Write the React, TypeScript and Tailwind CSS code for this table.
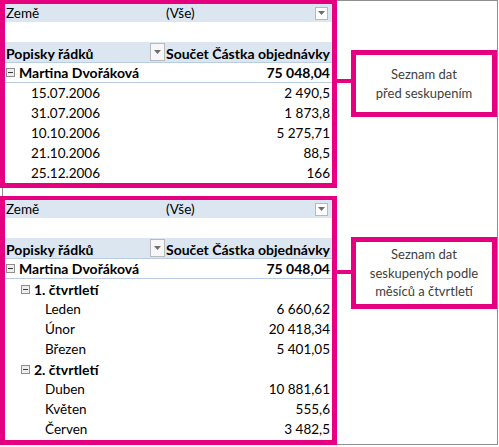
import React from "react";

function Caret({ tall = false }: { tall?: boolean }) {
  return (
    <div
      className={
        tall
          ? "w-[15px] h-[18px] border border-[#b9b9b9] bg-[#f7f7f7] flex items-center justify-center"
          : "w-[13px] h-[13px] border border-[#b9b9b9] bg-white flex items-center justify-center"
      }
    >
      <svg width="7" height="4" viewBox="0 0 7 4">
        <path d="M0 0h7L3.5 4z" fill="#6e6e6e" />
      </svg>
    </div>
  );
}

function Minus() {
  return (
    <svg width="9" height="9" viewBox="0 0 9 9" className="shrink-0">
      <rect x="0.5" y="0.5" width="8" height="8" fill="#eeeeee" stroke="#8e8e8e" />
      <path d="M2 4.5h5" stroke="#3a3a3a" strokeWidth="1" />
    </svg>
  );
}

type Row = { label: string; value?: string; level: number; group?: boolean };

function Pivot({ rows, h }: { rows: Row[]; h: string }) {
  return (
    <div
      className={`w-[337px] ${h} shrink-0 border-[#e4007f] border-x-[5px] border-t-[4px] border-b-[5px] bg-white flex flex-col text-[13.5px] text-black leading-[17px]`}
    >
      <div className="h-[18px] bg-[#dce6f1] flex items-center">
        <div className="w-[160px] pl-[1px]">Země</div>
        <div className="flex-1 flex items-center pl-[1px] pr-[4px]">
          <span>(Vše)</span>
          <div className="ml-auto">
            <Caret />
          </div>
        </div>
      </div>
      <div className="h-[20px]" />
      <div className="h-[21px] bg-[#dce6f1] flex items-center border-b border-[#b8cce4] font-bold text-[14px]">
        <div className="w-[160px] pl-[1px] flex items-center">
          <span className="pt-[2px]">Popisky řádků</span>
          <div className="ml-auto">
            <Caret tall />
          </div>
        </div>
        <div className="flex-1 pl-[1px] pt-[2px]">Součet Částka objednávky</div>
      </div>
      <div className="h-[20px] flex items-center border-b border-[#b8cce4] font-bold text-[14px]">
        <div className="flex items-center pl-[1px] gap-[4px]">
          <Minus />
          <span>Martina Dvořáková</span>
        </div>
        <div className="ml-auto pr-[2px]">75 048,04</div>
      </div>
      {rows.map((r, i) => (
        <div key={i} className="h-[20px] flex items-center">
          {r.group ? (
            <div className="flex items-center pl-[16px] gap-[4px] font-bold text-[14px]">
              <Minus />
              <span>{r.label}</span>
            </div>
          ) : (
            <div className={r.level === 2 ? "pl-[40px]" : "pl-[26px]"}>{r.label}</div>
          )}
          {r.value && <div className="ml-auto pr-[2px]">{r.value}</div>}
        </div>
      ))}
    </div>
  );
}

function Callout({ lines, h }: { lines: string[]; h: string }) {
  return (
    <div
      className={`w-[146px] ${h} border-[5px] border-[#e4007f] bg-white flex flex-col items-center justify-center text-[13px] leading-[18.5px] text-[#404040]`}
    >
      {lines.map((l, i) => (
        <div key={i}>{l}</div>
      ))}
    </div>
  );
}

export default function App() {
  const top: Row[] = [
    { label: "15.07.2006", value: "2 490,5", level: 1 },
    { label: "31.07.2006", value: "1 873,8", level: 1 },
    { label: "10.10.2006", value: "5 275,71", level: 1 },
    { label: "21.10.2006", value: "88,5", level: 1 },
    { label: "25.12.2006", value: "166", level: 1 },
  ];
  const bottom: Row[] = [
    { label: "1. čtvrtletí", level: 1, group: true },
    { label: "Leden", value: "6 660,62", level: 2 },
    { label: "Únor", value: "20 418,34", level: 2 },
    { label: "Březen", value: "5 401,05", level: 2 },
    { label: "2. čtvrtletí", level: 1, group: true },
    { label: "Duben", value: "10 881,61", level: 2 },
    { label: "Květen", value: "555,6", level: 2 },
    { label: "Červen", value: "3 482,5", level: 2 },
  ];
  return (
    <div className="w-[499px] h-[447px] bg-white font-[Lato,sans-serif] overflow-hidden">
      <div className="ml-[2px] w-[496px] h-[445px] border border-[#8f8f8f]">
        <div className="-ml-[3px] -mt-[1px] w-[499px] flex flex-col">
          <div className="flex items-start">
            <Pivot rows={top} h="h-[188px]" />
            <div className="flex items-start mt-[50px]">
              <div className="w-[14px] h-[4px] bg-[#e4007f] mt-[29px]" />
              <Callout lines={["Seznam dat", "před seskupením"]} h="h-[67px]" />
            </div>
          </div>
          <div className="flex items-start mt-[8px]">
            <Pivot rows={bottom} h="h-[249px]" />
            <div className="flex items-start mt-[41px]">
              <div className="w-[14px] h-[4px] bg-[#e4007f] mt-[33px]" />
              <Callout
                lines={["Seznam dat", "seskupených podle", "měsíců a čtvrtletí"]}
                h="h-[72px]"
              />
            </div>
          </div>
        </div>
      </div>
    </div>
  );
}
